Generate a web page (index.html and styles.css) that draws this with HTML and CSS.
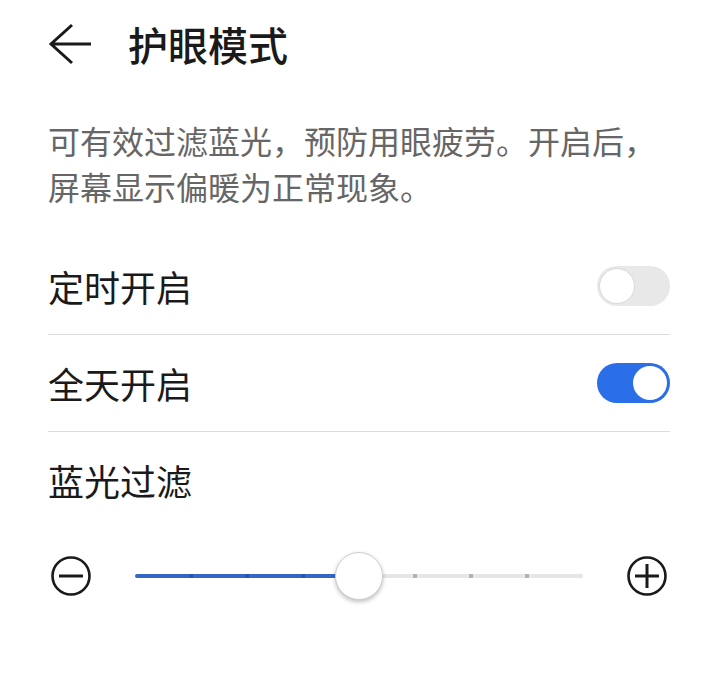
FILE: index.html
```html
<!DOCTYPE html>
<html lang="zh-CN">

<head>
  <meta charset="UTF-8">
  <meta name="viewport" content="width=device-width, initial-scale=1.0">
  <title>护眼模式</title>
  <link rel="stylesheet" href="styles.css">
</head>

<body>
  <header class="app-bar">
    <svg class="back-icon" width="46" height="42" viewBox="0 0 46 42">
      <path d="M25 2 L4 21 L25 40 M4 21 H44" fill="none" stroke="#1a1a1a" stroke-width="3" stroke-linejoin="miter" />
    </svg>
    <h1 class="title">护眼模式</h1>
  </header>

  <p class="desc">可有效过滤蓝光，预防用眼疲劳。开启后，屏幕显示偏暖为正常现象。</p>

  <ul class="list">
    <li class="row">
      <span class="row-label">定时开启</span>
      <span class="switch"><span class="knob"></span></span>
    </li>
    <li class="row">
      <span class="row-label">全天开启</span>
      <span class="switch on"><span class="knob"></span></span>
    </li>
    <li class="row no-line">
      <span class="row-label">蓝光过滤</span>
    </li>
  </ul>

  <div class="slider">
    <svg class="step-icon" width="46" height="42" viewBox="0 0 46 42">
      <circle cx="23" cy="21" r="18.5" fill="none" stroke="#1a1a1a" stroke-width="2.6" />
      <path d="M11 21 H35" stroke="#1a1a1a" stroke-width="3" />
    </svg>
    <div class="track">
      <div class="fill" style="width: 50%"></div>
      <span class="tick done" style="left: 56px"></span>
      <span class="tick done" style="left: 112px"></span>
      <span class="tick done" style="left: 168px"></span>
      <span class="tick" style="left: 280px"></span>
      <span class="tick" style="left: 336px"></span>
      <span class="tick" style="left: 392px"></span>
      <span class="thumb" style="left: 224px"></span>
    </div>
    <svg class="step-icon" width="46" height="42" viewBox="0 0 46 42">
      <circle cx="23" cy="21" r="18.5" fill="none" stroke="#1a1a1a" stroke-width="2.6" />
      <path d="M11 21 H35 M23 9 V33" stroke="#1a1a1a" stroke-width="3" />
    </svg>
  </div>
</body>

</html>
```

FILE: styles.css
```css
body {
  margin: 0;
  padding: 0 48px;
  background: #ffffff;
  font-family: "Noto Sans CJK SC", "Noto Sans", sans-serif;
  color: #1a1a1a;
}

.app-bar {
  height: 88px;
  display: flex;
  align-items: center;
}

.back-icon {
  display: block;
  margin-left: -1px;
}

.title {
  margin: 0 0 0 35px;
  font-size: 40px;
  font-weight: 500;
  line-height: 1;
  color: #1a1a1a;
}

.desc {
  margin: 29px 0 0;
  font-size: 32px;
  line-height: 46px;
  color: #666666;
}

.list {
  list-style: none;
  margin: 29px 0 0;
  padding: 0;
}

.row {
  height: 96px;
  display: flex;
  align-items: center;
  justify-content: space-between;
  border-bottom: 1px solid #dcdcdc;
}

.row.no-line {
  border-bottom: none;
}

.row-label {
  font-size: 36px;
  line-height: 1;
}

.switch {
  position: relative;
  width: 73px;
  height: 40px;
  border-radius: 20px;
  background: #e8e8e8;
}

.switch .knob {
  position: absolute;
  top: 2px;
  left: 2px;
  width: 34px;
  height: 34px;
  border-radius: 50%;
  background: #ffffff;
  border: 1px solid #d8d8d8;
}

.switch.on {
  background: #2a6ee8;
}

.switch.on .knob {
  top: 3px;
  left: auto;
  right: 3px;
  border: none;
}

.slider {
  height: 96px;
  display: flex;
  align-items: center;
}

.step-icon {
  display: block;
}

.track {
  position: relative;
  width: 448px;
  height: 4px;
  margin: 0 41px;
  border-radius: 2px;
  background: #e6e6e6;
}

.fill {
  height: 100%;
  border-radius: 2px;
  background: #3467c6;
}

.tick {
  position: absolute;
  top: 0;
  width: 4px;
  height: 4px;
  margin-left: -2px;
  background: #b4b4b4;
}

.tick.done {
  background: #2957ad;
}

.thumb {
  position: absolute;
  top: 50%;
  width: 46px;
  height: 46px;
  margin: -24px 0 0 -24px;
  border-radius: 50%;
  background: #ffffff;
  border: 1px solid #cfcfcf;
  box-shadow: 0 2px 4px rgba(0, 0, 0, 0.25);
}
```
